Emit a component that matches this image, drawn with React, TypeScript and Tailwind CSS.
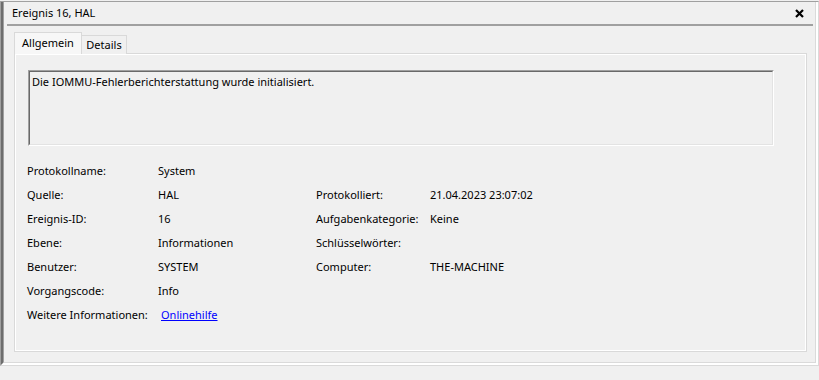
export default function App() {
  const rows = [
    ['Protokollname:', 'System', '', ''],
    ['Quelle:', 'HAL', 'Protokolliert:', '21.04.2023 23:07:02'],
    ['Ereignis-ID:', '16', 'Aufgabenkategorie:', 'Keine'],
    ['Ebene:', 'Informationen', 'Schlüsselwörter:', ''],
    ['Benutzer:', 'SYSTEM', 'Computer:', 'THE-MACHINE'],
    ['Vorgangscode:', 'Info', '', ''],
  ]

  return (
    <div className="w-[819px] h-[380px] bg-[#f0f0f0] text-black font-['Noto_Sans',sans-serif] text-[11px] leading-[16px] overflow-hidden pt-[1px]">
      <div className="h-[365px] flex flex-col border-t border-l border-[#a0a0a0] border-r border-r-[#dadada] border-b border-b-[#dadada]">
        <div className="flex-1 flex flex-col border-l-2 border-l-[#6d6d6d] border-r-2 border-r-white border-b-2 border-b-white">
          <div className="flex-1 flex flex-col border-l border-l-[#a0a0a0] border-r border-r-[#dadada] border-b border-b-[#dadada]">
            {/* title bar */}
            <div className="h-[22px] flex items-center justify-between pl-[8px] pr-[11px]">
              <span>Ereignis 16, HAL</span>
              <svg width="9" height="9" viewBox="0 0 9 9">
                <path d="M1 1L8 8M8 1L1 8" stroke="#000" strokeWidth="2.2" />
              </svg>
            </div>
            <div className="ml-[3px] mr-[2px] h-[2px] bg-[#a0a0a0]" />

            {/* tabs */}
            <div className="pt-[7px] pl-[10px] pr-[8px]">
              <div className="flex items-end h-[21px] relative z-10 -mb-[1px]">
                <div className="w-[68px] h-[22px] border border-b-0 border-[#d9d9d9] bg-[#f7f7f7] text-center pt-[2px]">
                  Allgemein
                </div>
                <div className="w-[45px] h-[19px] border border-l-0 border-b-0 border-[#d9d9d9] bg-[#f0f0f0] text-center pt-[1px]">
                  Details
                </div>
              </div>

              <div className="h-[299px] border border-[#d9d9d9]">
                <div className="h-full border border-white pt-[15px] pl-[12px] pr-[31px]">
                  <div className="h-[76px] border border-t-[#a0a0a0] border-l-[#a0a0a0] border-r-white border-b-white">
                    <div className="h-full border border-t-[#696969] border-l-[#696969] border-r-[#e3e3e3] border-b-[#e3e3e3] pl-[2px] pt-[2px]">
                      Die IOMMU-Fehlerberichterstattung wurde initialisiert.
                    </div>
                  </div>

                  <div className="mt-[13px] -ml-[1px] grid grid-cols-[131px_158px_114px_1fr]">
                    {rows.map((r, i) => (
                      <div key={i} className="contents">
                        <div className="h-[24px] flex items-center">{r[0]}</div>
                        <div className="h-[24px] flex items-center">{r[1]}</div>
                        <div className="h-[24px] flex items-center">{r[2]}</div>
                        <div className="h-[24px] flex items-center">{r[3]}</div>
                      </div>
                    ))}
                    <div className="h-[24px] flex items-center">Weitere Informationen:</div>
                    <div className="h-[24px] flex items-center">
                      <a href="#" className="ml-[3px] text-[#0000ff] underline">
                        Onlinehilfe
                      </a>
                    </div>
                  </div>
                </div>
              </div>
            </div>
          </div>
        </div>
      </div>
    </div>
  )
}
